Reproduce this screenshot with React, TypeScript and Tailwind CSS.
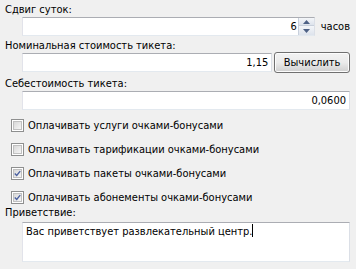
import React from "react";

const font = { fontFamily: '"DejaVu Sans Condensed", "Liberation Sans", Arial, sans-serif' };

function TextBox({ value, className = "", children }: { value?: string; className?: string; children?: React.ReactNode }) {
  return (
    <div
      className={`h-[19px] bg-white border border-t-[#abadb3] border-l-[#e2e3ea] border-r-[#dbdfe6] border-b-[#e3e9ef] flex items-center justify-end ${className}`}
    >
      {value !== undefined && <span className="pr-[3px] leading-[14px]">{value}</span>}
      {children}
    </div>
  );
}

function CheckBox({ checked, label }: { checked: boolean; label: string }) {
  return (
    <div className="flex items-center h-[13px]">
      <div className="ml-[6px] w-[13px] h-[13px] border border-[#8e8f8f] bg-white p-[1px]">
        <div className="w-full h-full border border-[#c0c0c0] bg-gradient-to-br from-[#d8d8d8] to-[#f6f6f6] flex items-center justify-center">
          {checked && (
            <svg width="9" height="9" viewBox="0 0 9 9">
              <path d="M1 4.5 L3.5 7 L8 1.5" fill="none" stroke="#4a60a0" strokeWidth="1.8" />
            </svg>
          )}
        </div>
      </div>
      <span className="ml-[4px] leading-[14px]">{label}</span>
    </div>
  );
}

export default function App() {
  return (
    <div
      className="w-[356px] h-[269px] bg-[#f0f0f0] text-[11px] text-black pt-[3px] pl-[5px] pr-[6px] flex flex-col overflow-hidden"
      style={font}
    >
      <div className="h-[14px] leading-[14px]">Сдвиг суток:</div>
      <div className="flex items-center h-[19px]">
        <TextBox className="ml-[17px] w-[294px] pr-0">
          <span className="pr-[1px] leading-[14px]">6</span>
          <div className="w-[16px] h-[17px] flex flex-col border-l border-[#c8d0dc]">
            <div className="h-[8px] flex items-center justify-center bg-gradient-to-b from-[#f4f6f9] to-[#dde3ec] border-b border-[#c8d0dc]">
              <svg width="7" height="4" viewBox="0 0 7 4"><path d="M0 4 L3.5 0 L7 4Z" fill="#4d6185" /></svg>
            </div>
            <div className="flex-1 flex items-center justify-center bg-gradient-to-b from-[#f4f6f9] to-[#dde3ec]">
              <svg width="7" height="4" viewBox="0 0 7 4"><path d="M0 0 L3.5 4 L7 0Z" fill="#4d6185" /></svg>
            </div>
          </div>
        </TextBox>
        <span className="ml-[6px] leading-[14px]">часов</span>
      </div>
      <div className="mt-[3px] h-[14px] leading-[14px]">Номинальная стоимость тикета:</div>
      <div className="flex items-center h-[19px]">
        <TextBox value="1,15" className="ml-[17px] w-[251px]" />
        <button
          className="ml-[2px] h-[21px] w-[76px] rounded-[3px] border border-[#707070] bg-gradient-to-b from-[#f2f2f2] via-[#ebebeb] to-[#cfcfcf] text-[11px] leading-[14px] shadow-[inset_0_0_0_1px_#fcfcfc]"
          style={font}
        >
          Вычислить
        </button>
      </div>
      <div className="mt-[5px] h-[14px] leading-[14px]">Себестоимость тикета:</div>
      <TextBox value="0,0600" className="ml-[17px] w-[328px]" />
      <div className="mt-[9px] flex flex-col gap-[11px]">
        <CheckBox checked={false} label="Оплачивать услуги очками-бонусами" />
        <CheckBox checked={false} label="Оплачивать тарификации очками-бонусами" />
        <CheckBox checked={true} label="Оплачивать пакеты очками-бонусами" />
        <CheckBox checked={true} label="Оплачивать абонементы очками-бонусами" />
      </div>
      <div className="mt-[2px] h-[14px] leading-[14px]">Приветствие:</div>
      <div className="mt-[2px] ml-[17px] w-[328px] h-[40px] bg-white border border-t-[#abadb3] border-l-[#e2e3ea] border-r-[#dbdfe6] border-b-[#e3e9ef] pl-[3px] pt-[1px] leading-[14px]">
        <span>Вас приветствует развлекательный центр.</span>
        <span className="inline-block w-[1px] h-[13px] bg-black align-[-2px]" />
      </div>
    </div>
  );
}
